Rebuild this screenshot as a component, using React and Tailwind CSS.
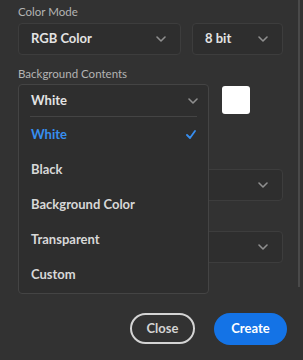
const Chevron = ({ className = '' }) => (
  <svg width="10" height="6" viewBox="0 0 10 6" className={className}>
    <path d="M1 1l4 4 4-4" fill="none" stroke="currentColor" strokeWidth="1.6" strokeLinecap="round" strokeLinejoin="round" />
  </svg>
);

const Check = () => (
  <svg width="10" height="9" viewBox="0 0 10 9" className="text-[#378ef0]">
    <path d="M1 5l3 3 5-7" fill="none" stroke="currentColor" strokeWidth="1.8" strokeLinecap="round" strokeLinejoin="round" />
  </svg>
);

const Select = ({ value, className = '' }) => (
  <div className={`h-[32px] flex items-center justify-between pl-3 pr-[14px] rounded-[4px] border border-[#3d3d3d] bg-[#2e2e2e] ${className}`}>
    <span className="text-[13px] font-bold text-[#e3e3e3]">{value}</span>
    <Chevron className="text-[#8f8f8f]" />
  </div>
);

const items = ['White', 'Black', 'Background Color', 'Transparent', 'Custom'];

export default function App() {
  return (
    <div className="relative w-[303px] h-[360px] bg-[#323232] overflow-hidden" style={{ fontFamily: 'Lato, "Open Sans", sans-serif' }}>
      <div className="absolute right-[3px] top-0 w-[2px] h-[287px] bg-[#4a4a4a]" />

      <div className="pl-[18px] pr-[20px] pt-[3px]">
        <div className="text-[11.5px] leading-[18px] text-[#b4b4b4]">Color Mode</div>
        <div className="flex gap-[11px] mt-[2px]">
          <Select value="RGB Color" className="w-[163px]" />
          <Select value="8 bit" className="w-[91px]" />
        </div>

        <div className="text-[11.5px] leading-[18px] text-[#b4b4b4] mt-[10px]">Background Contents</div>
        <div className="relative flex items-center gap-[13px] mt-[1px] h-[32px]">
          <div className="w-[191px]" />
          <div className="w-[28px] h-[28px] rounded-[3px] bg-white" />

          <div className="absolute left-0 top-0 w-[191px] rounded-[4px] border border-[#444444] bg-[#2e2e2e] z-10">
            <div className="h-[31px] flex items-center justify-between pl-3 pr-[10px]">
              <span className="text-[13px] font-bold text-[#e3e3e3]">White</span>
              <Chevron className="text-[#8f8f8f]" />
            </div>
            <div className="mx-[11px] h-px bg-[#444444]" />
            <div className="pb-px">
              {items.map((it, i) => (
                <div key={it} className="h-[35px] flex items-center justify-between pl-3 pr-[12px]">
                  <span className={`text-[13px] font-bold ${i === 0 ? 'text-[#378ef0]' : 'text-[#d8d8d8]'}`}>{it}</span>
                  {i === 0 && <Check />}
                </div>
              ))}
            </div>
          </div>
        </div>

        <Select value="" className="w-[265px] mt-[53px] h-[31px]" />
        <Select value="" className="w-[265px] mt-[30px] h-[31px]" />

        <div className="flex justify-end gap-[19px] mt-[50px]">
          <button className="w-[65px] h-[31px] rounded-full border-2 border-[#d4d4d4] text-[13px] font-bold text-[#d4d4d4]">Close</button>
          <button className="w-[73px] h-[32px] rounded-full bg-[#1473e6] text-[13px] font-bold text-white -mr-[4px]">Create</button>
        </div>
      </div>
    </div>
  );
}
